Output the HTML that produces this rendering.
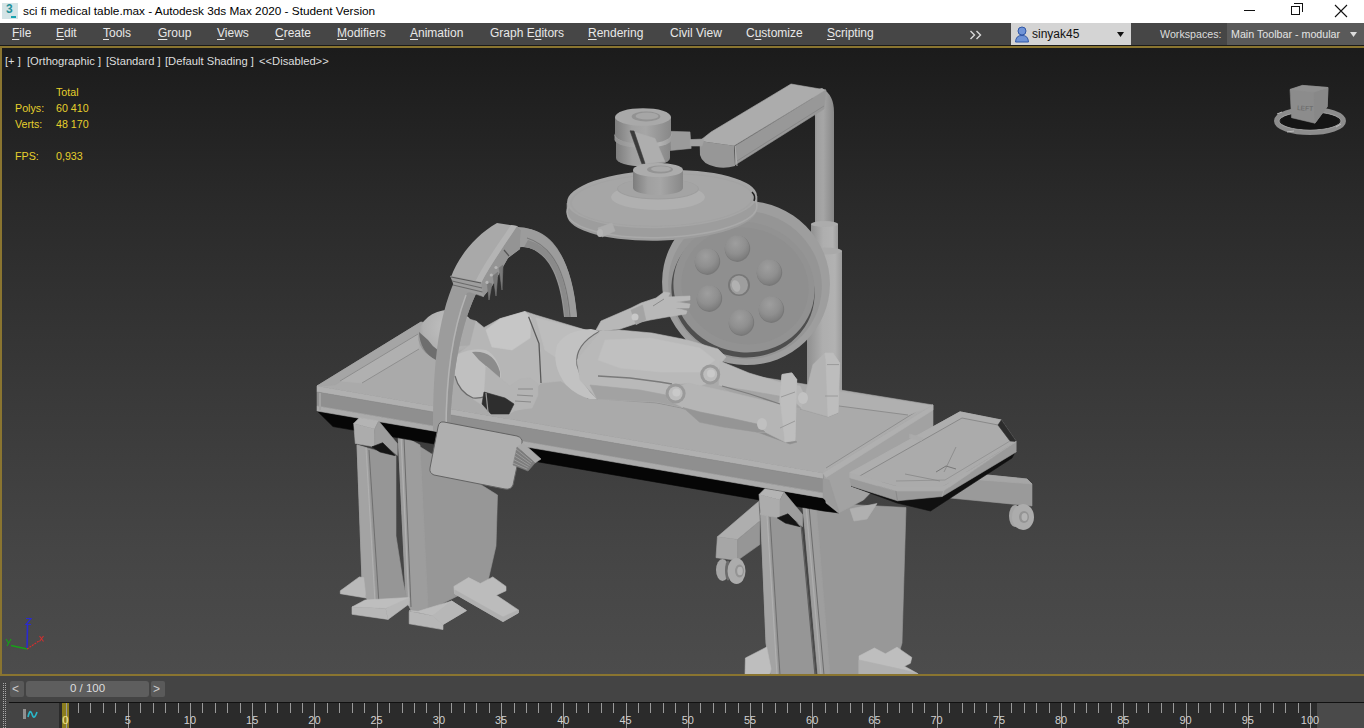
<!DOCTYPE html>
<html><head><meta charset="utf-8">
<style>
*{margin:0;padding:0;box-sizing:border-box}
html,body{width:1364px;height:728px;overflow:hidden;background:#444;font-family:"Liberation Sans",sans-serif}
.abs{position:absolute}
#title{position:absolute;left:0;top:0;width:1364px;height:23px;background:#fff}
#title .t{position:absolute;left:23px;top:4px;font-size:11.8px;color:#000;white-space:nowrap}
#menu{position:absolute;left:0;top:23px;width:1364px;height:23px;background:#464646;border-bottom:1px solid #1a1a1a}
.mi{position:absolute;top:3px;font-size:12px;color:#e8e8e8;white-space:nowrap}
.mi u{text-decoration:underline;text-underline-offset:2px}
#vp{position:absolute;left:0;top:46px;width:1364px;height:630px;border-top:2px solid #8a7530;border-left:2px solid #8a7530;border-bottom:2px solid #8a7530;
  background:linear-gradient(#1b1b1b 0%,#2a2a2a 25%,#393939 55%,#454545 80%,#4c4c4c 100%)}
.vl{position:absolute;font-size:11.2px;color:#dedede;white-space:nowrap}
.st{position:absolute;font-size:10.7px;color:#e6d02c;white-space:nowrap}
#tb{position:absolute;left:0;top:676px;width:1364px;height:52px;background:#444}
.tk{position:absolute;width:1px;background:#9a9a9a}
.tl{position:absolute;top:714px;width:40px;text-align:center;font-size:11px;color:#d0d0d0}
</style></head><body>
<div id="title">
 <div class="abs" style="left:2px;top:3px;width:16px;height:16px;background:#d3e4e6"></div>
 <div class="abs" style="left:6px;top:2px;font-size:12px;font-weight:bold;color:#22909a">3</div>
 <div class="abs" style="left:11px;top:16px;width:5px;height:2px;background:#1aa3b0"></div>
 <span class="t">sci fi medical table.max - Autodesk 3ds Max 2020 - Student Version</span>
 <div class="abs" style="left:1244px;top:10px;width:11px;height:1px;background:#111"></div>
 <div class="abs" style="left:1291px;top:6px;width:9px;height:9px;border:1px solid #111"></div>
 <div class="abs" style="left:1294px;top:3px;width:9px;height:9px;border-top:1px solid #111;border-right:1px solid #111"></div>
 <svg class="abs" style="left:1334px;top:4px" width="14" height="14"><path d="M1 1L13 13M13 1L1 13" stroke="#111" stroke-width="1.1"/></svg>
</div>
<div id="menu">
<span class="mi" style="left:12px"><u>F</u>ile</span>
<span class="mi" style="left:56px"><u>E</u>dit</span>
<span class="mi" style="left:103px"><u>T</u>ools</span>
<span class="mi" style="left:158px"><u>G</u>roup</span>
<span class="mi" style="left:217px"><u>V</u>iews</span>
<span class="mi" style="left:275px"><u>C</u>reate</span>
<span class="mi" style="left:337px"><u>M</u>odifiers</span>
<span class="mi" style="left:410px"><u>A</u>nimation</span>
<span class="mi" style="left:490px">Graph E<u>d</u>itors</span>
<span class="mi" style="left:588px"><u>R</u>endering</span>
<span class="mi" style="left:670px">Civil View</span>
<span class="mi" style="left:746px">C<u>u</u>stomize</span>
<span class="mi" style="left:827px"><u>S</u>cripting</span>
 <svg class="abs" style="left:969px;top:7px" width="14" height="10"><path d="M1.5 1L5.5 5L1.5 9M7.5 1L11.5 5L7.5 9" stroke="#d8d8d8" stroke-width="1.4" fill="none"/></svg>
 <div class="abs" style="left:1011px;top:0px;width:120px;height:22px;background:#d4d4d4"></div>
 <svg class="abs" style="left:1014px;top:2px" width="16" height="18"><circle cx="8" cy="6" r="4" fill="#6f93d6" stroke="#2f56a6" stroke-width="1"/><path d="M1.5 17 Q2 10 8 10.5 Q14 10 14.5 17Z" fill="#6f93d6" stroke="#2f56a6" stroke-width="1"/></svg>
 <span class="abs" style="left:1032px;top:4px;font-size:12px;color:#111">sinyak45</span>
 <svg class="abs" style="left:1117px;top:9px" width="8" height="6"><path d="M0 0H7L3.5 5Z" fill="#111"/></svg>
 <span class="abs" style="left:1160px;top:5px;font-size:10.7px;color:#dcdcdc">Workspaces:</span>
 <div class="abs" style="left:1227px;top:0px;width:137px;height:22px;background:#5a5a5a"></div>
 <span class="abs" style="left:1231px;top:5px;font-size:10.7px;color:#e4e4e4">Main Toolbar - modular</span>
 <svg class="abs" style="left:1350px;top:9px" width="8" height="6"><path d="M0 0H7L3.5 5Z" fill="#ddd"/></svg>
</div>
<div id="vp"></div>
<span class="vl" style="left:5px;top:54.5px">[+ ]</span><span class="vl" style="left:27px;top:54.5px">[Orthographic ]</span><span class="vl" style="left:106px;top:54.5px">[Standard ]</span><span class="vl" style="left:165px;top:54.5px">[Default Shading ]</span><span class="vl" style="left:259px;top:54.5px">&lt;&lt;Disabled&gt;&gt;</span>
<span class="st" style="left:56px;top:86px">Total</span>
<span class="st" style="left:15px;top:102px">Polys:</span><span class="st" style="left:56px;top:102px">60 410</span>
<span class="st" style="left:15px;top:118px">Verts:</span><span class="st" style="left:56px;top:118px">48 170</span>
<span class="st" style="left:15px;top:150px">FPS:</span><span class="st" style="left:56px;top:150px">0,933</span>
<svg class="abs" style="left:0;top:0" width="1364" height="674">
<defs>
 <linearGradient id="cylV" x1="0" y1="0" x2="1" y2="0">
  <stop offset="0" stop-color="#7d7d7d"/><stop offset="0.3" stop-color="#a0a0a0"/><stop offset="0.55" stop-color="#a6a6a6"/><stop offset="1" stop-color="#888888"/>
 </linearGradient>
 <linearGradient id="cylV2" x1="0" y1="0" x2="1" y2="0">
  <stop offset="0" stop-color="#909090"/><stop offset="0.45" stop-color="#aeaeae"/><stop offset="0.8" stop-color="#b2b2b2"/><stop offset="1" stop-color="#9b9b9b"/>
 </linearGradient>
</defs>
<path d="M815,117 L815,226 L834,226 L834,112 Q834,95 822,88 L810,92 Q815,100 815,117 Z" fill="url(#cylV)" />
<rect x="811" y="224" width="27" height="28" fill="url(#cylV2)"/>
<ellipse cx="824.5" cy="224" rx="13.5" ry="3" fill="#acacac" />
<rect x="807" y="251" width="35" height="145" fill="url(#cylV2)"/>
<ellipse cx="824.5" cy="251" rx="17.5" ry="3.5" fill="#a9a9a9" />
<ellipse cx="746" cy="283" rx="84" ry="82" fill="#9e9e9e" transform="rotate(12 746 283)" />
<ellipse cx="745" cy="285" rx="77" ry="74" fill="#959595" transform="rotate(14 745 285)" />
<ellipse cx="743" cy="291" rx="72" ry="66" fill="#4e4e4e" transform="rotate(15 743 291)" />
<ellipse cx="744" cy="287" rx="71" ry="65" fill="#929292" transform="rotate(15 744 287)" />
<ellipse cx="745" cy="286" rx="64" ry="58" fill="#8f8f8f" transform="rotate(15 745 286)" />
<radialGradient id="lightG" cx="0.38" cy="0.35" r="0.7"><stop offset="0" stop-color="#9e9e9e"/><stop offset="0.6" stop-color="#8f8f8f"/><stop offset="1" stop-color="#7b7b7b"/></radialGradient>
<ellipse cx="707.5" cy="261.8" rx="12.6" ry="13.1" fill="#787878" transform="rotate(20 707.5 261.8)" />
<ellipse cx="707" cy="261" rx="12.2" ry="12.8" fill="url(#lightG)" transform="rotate(20 707 261)" />
<ellipse cx="737.5" cy="248.8" rx="12.6" ry="13.1" fill="#787878" transform="rotate(20 737.5 248.8)" />
<ellipse cx="737" cy="248" rx="12.2" ry="12.8" fill="url(#lightG)" transform="rotate(20 737 248)" />
<ellipse cx="769.5" cy="272.8" rx="12.6" ry="13.1" fill="#787878" transform="rotate(20 769.5 272.8)" />
<ellipse cx="769" cy="272" rx="12.2" ry="12.8" fill="url(#lightG)" transform="rotate(20 769 272)" />
<ellipse cx="771.5" cy="309.8" rx="12.6" ry="13.1" fill="#787878" transform="rotate(20 771.5 309.8)" />
<ellipse cx="771" cy="309" rx="12.2" ry="12.8" fill="url(#lightG)" transform="rotate(20 771 309)" />
<ellipse cx="741.5" cy="322.8" rx="12.6" ry="13.1" fill="#787878" transform="rotate(20 741.5 322.8)" />
<ellipse cx="741" cy="322" rx="12.2" ry="12.8" fill="url(#lightG)" transform="rotate(20 741 322)" />
<ellipse cx="709.5" cy="298.8" rx="12.6" ry="13.1" fill="#787878" transform="rotate(20 709.5 298.8)" />
<ellipse cx="709" cy="298" rx="12.2" ry="12.8" fill="url(#lightG)" transform="rotate(20 709 298)" />
<ellipse cx="739" cy="285" rx="11" ry="11" fill="#787878" />
<ellipse cx="739" cy="285" rx="9" ry="9.5" fill="#9e9e9e" />
<ellipse cx="736" cy="286" rx="4" ry="6" fill="#b1b1b1" transform="rotate(-20 736 286)" />
<path d="M520,228 C545,228 570,245 577,317 L564,317 C560,275 548,252 524,246 Z" fill="#959595" />
<path d="M530,238 C552,244 566,265 571,317 L568,317 C563,270 552,250 528,243 Z" fill="#7b7b7b" />
<polygon points="398,433 497.5,495 496,546 488,581 425,612 412,612 406,600" fill="#979797" stroke="#979797" stroke-width="0.6" stroke-linejoin="round" />
<polygon points="398,433 420,445 428,608 412,612 406,600" fill="#9d9d9d" stroke="#9d9d9d" stroke-width="0.6" stroke-linejoin="round" />
<polyline points="401,436 409,606" fill="none" stroke="#b0b0b0" stroke-width="1.2" />
<polyline points="404,438 411,607" fill="none" stroke="#6d6d6d" stroke-width="1" />
<polygon points="357,445 396,456 396,536 403,581 407,600 368,603 362,581" fill="#969696" stroke="#969696" stroke-width="0.6" stroke-linejoin="round" />
<polygon points="357,445 367,448 376,602 368,603 362,581" fill="#a3a3a3" stroke="#a3a3a3" stroke-width="0.6" stroke-linejoin="round" />
<polyline points="366,448 375,602" fill="none" stroke="#b1b1b1" stroke-width="1" />
<polyline points="369,450 379,604" fill="none" stroke="#6f6f6f" stroke-width="1" />
<polygon points="340.3,590.8 359.3,576.9 363.7,577.6 366,598 340.3,593.7" fill="#b9b9b9" stroke="#b9b9b9" stroke-width="0.6" stroke-linejoin="round" />
<polygon points="352,607 365,600 409,597.5 409,601 385.7,608.4" fill="#bebebe" stroke="#bebebe" stroke-width="0.6" stroke-linejoin="round" />
<polygon points="352,607 385.7,608.4 388,619.4 352,614.3" fill="#b7b7b7" stroke="#b7b7b7" stroke-width="0.6" stroke-linejoin="round" />
<polygon points="385.7,608.4 409,598 409,604 388,619.4" fill="#b7b7b7" stroke="#b7b7b7" stroke-width="0.6" stroke-linejoin="round" />
<polygon points="409.2,610.6 418,611.3 451.7,601 466.4,610.6 443,624.5 432.6,615.7" fill="#bcbcbc" stroke="#bcbcbc" stroke-width="0.6" stroke-linejoin="round" />
<polygon points="409.2,611.3 432.6,615.7 443,624.5 443,629.6 409.2,623.8" fill="#b7b7b7" stroke="#b7b7b7" stroke-width="0.6" stroke-linejoin="round" />
<polygon points="432.6,615.7 451.7,601 466.4,610.6 443,624.5" fill="#b7b7b7" stroke="#b7b7b7" stroke-width="0.6" stroke-linejoin="round" />
<polygon points="453.9,586.4 468.6,577.6 480.3,583.5 492.8,576.9 506,586.4 506,590.8 496.4,595.2 518.4,609.9 518.4,612.8 503,621.6 454.6,593.7" fill="#bcbcbc" stroke="#bcbcbc" stroke-width="0.6" stroke-linejoin="round" />
<polygon points="454.6,593.7 503,621.6 518.4,612.8 518.4,609.9 503,617 455,590" fill="#b0b0b0" stroke="#b0b0b0" stroke-width="0.6" stroke-linejoin="round" />
<polygon points="717.4,536.8 758.5,501.5 759.8,521 737.6,539.4" fill="#aeaeae" stroke="#aeaeae" stroke-width="0.6" stroke-linejoin="round" />
<polygon points="717.4,536.8 737.6,539.4 737.6,560.3 716,557.7" fill="#a6a6a6" stroke="#a6a6a6" stroke-width="0.6" stroke-linejoin="round" />
<polygon points="737.6,539.4 759.8,521 759.8,544.6 737.6,560.3" fill="#969696" stroke="#969696" stroke-width="0.6" stroke-linejoin="round" />
<ellipse cx="722.5" cy="570" rx="6.5" ry="11" fill="#a5a5a5" />
<ellipse cx="728" cy="570.5" rx="3" ry="10" fill="#6b6b6b" />
<ellipse cx="736.5" cy="571" rx="9" ry="13" fill="#acacac" />
<ellipse cx="739.5" cy="571" rx="4.5" ry="6.5" fill="#949494" />
<ellipse cx="740" cy="571" rx="2.8" ry="4.2" fill="#b4b4b4" />
<polygon points="948,471 1027,479 1032,484 1032,506 950,498" fill="#9a9a9a" stroke="#9a9a9a" stroke-width="0.6" stroke-linejoin="round" />
<polygon points="948,471 1027,479 1032,484 955,478" fill="#a6a6a6" stroke="#a6a6a6" stroke-width="0.6" stroke-linejoin="round" />
<ellipse cx="1015" cy="516" rx="6" ry="11" fill="#a5a5a5" />
<ellipse cx="1019" cy="516.5" rx="3" ry="10" fill="#6b6b6b" />
<ellipse cx="1023" cy="517" rx="11" ry="13" fill="#acacac" />
<ellipse cx="1024" cy="517" rx="5" ry="6" fill="#949494" />
<ellipse cx="1024.5" cy="517" rx="3" ry="4" fill="#b4b4b4" />
<polygon points="802.5,502 906,507.5 902,643 897,660 893,675 818,675" fill="#989898" stroke="#989898" stroke-width="0.6" stroke-linejoin="round" />
<polygon points="802.5,502 816,503 830,675 818,675" fill="#9e9e9e" stroke="#9e9e9e" stroke-width="0.6" stroke-linejoin="round" />
<polyline points="806,505 821,675" fill="none" stroke="#aeaeae" stroke-width="1.2" />
<polyline points="809,506 824,675" fill="none" stroke="#6d6d6d" stroke-width="1" />
<polygon points="760.6,513 801,524 815,675 771,675 766,643" fill="#969696" stroke="#969696" stroke-width="0.6" stroke-linejoin="round" />
<polygon points="760.6,513 768,515 778,675 771,675 766,643" fill="#a3a3a3" stroke="#a3a3a3" stroke-width="0.6" stroke-linejoin="round" />
<polyline points="767,516 777,675" fill="none" stroke="#b1b1b1" stroke-width="1" />
<polyline points="770,517 780,675" fill="none" stroke="#6f6f6f" stroke-width="1" />
<polyline points="801,524 815,675" fill="none" stroke="#5e5e5e" stroke-width="1.2" />
<polygon points="745.4,658 766.7,647 771,669 769.6,675 745,675" fill="#bebebe" stroke="#bebebe" stroke-width="0.6" stroke-linejoin="round" />
<polygon points="859,656 874.4,648 885.4,653.8 897,647.2 911.8,657.4 910.4,663.3 904.5,666.2 917.7,673.6 917.7,675 859,675" fill="#bebebe" stroke="#bebebe" stroke-width="0.6" stroke-linejoin="round" />
<polygon points="859,660 904.5,670 917.7,673.6 917.7,675 859,675" fill="#b0b0b0" stroke="#b0b0b0" stroke-width="0.6" stroke-linejoin="round" />
<polygon points="317,410.8 823,497.9 839,513 823,510.9 700,489.7 333,426.6" fill="#060606" stroke="#060606" stroke-width="0.6" stroke-linejoin="round" />
<polygon points="317,386 421,322 933,405 823,472.9" fill="#aaaaaa" stroke="#aaaaaa" stroke-width="0.6" stroke-linejoin="round" />
<polygon points="317,386 421,322 428,327 335,385" fill="#a5a5a5" stroke="#a5a5a5" stroke-width="0.6" stroke-linejoin="round" />
<polygon points="823,472.9 826,468 925,406 933,405" fill="#acacac" stroke="#acacac" stroke-width="0.6" stroke-linejoin="round" />
<polyline points="826,468 925,406" fill="none" stroke="#8f8f8f" stroke-width="1" />
<polygon points="340,381 418,334 419,349 362,383" fill="#b0b0b0" stroke="#b0b0b0" stroke-width="0.6" stroke-linejoin="round" />
<polyline points="340,381 418,334" fill="none" stroke="#8d8d8d" stroke-width="1" />
<polyline points="362,383 419,349" fill="none" stroke="#8f8f8f" stroke-width="1" />
<polygon points="834,391 933,406 908,415 839,406" fill="#b0b0b0" stroke="#b0b0b0" stroke-width="0.6" stroke-linejoin="round" />
<polyline points="839,406 908,415" fill="none" stroke="#8d8d8d" stroke-width="1" />
<polygon points="317,386 823,472.9 823,478.9 317,392" fill="#b0b0b0" stroke="#b0b0b0" stroke-width="0.6" stroke-linejoin="round" />
<polygon points="317,392 823,478.9 823,492.9 317,406" fill="#8f8f8f" stroke="#8f8f8f" stroke-width="0.6" stroke-linejoin="round" />
<polygon points="317,406 823,492.9 823,497.9 317,411" fill="#ababab" stroke="#ababab" stroke-width="0.6" stroke-linejoin="round" />
<polyline points="320,393 320,410" fill="none" stroke="#a2a2a2" stroke-width="2" />
<polygon points="823,472.9 933,405 933,428 863.5,500 838.5,513 826,503" fill="#a2a2a2" stroke="#a2a2a2" stroke-width="0.6" stroke-linejoin="round" />
<polygon points="823,472.9 826,477.4 933,410 933,405" fill="#b0b0b0" stroke="#b0b0b0" stroke-width="0.6" stroke-linejoin="round" />
<polygon points="823,478.9 829,480 839,512 823,497.9" fill="#9b9b9b" stroke="#9b9b9b" stroke-width="0.6" stroke-linejoin="round" />
<polygon points="850,509 877,503.5 867,519 854,521" fill="#b0b0b0" stroke="#b0b0b0" stroke-width="0.6" stroke-linejoin="round" />
<polygon points="353.7,423.4 374.7,429 374.7,446.8 355.3,443.5" fill="#acacac" stroke="#acacac" stroke-width="0.6" stroke-linejoin="round" />
<polygon points="353.7,423.4 359.4,417.7 378.7,421 374.7,429" fill="#b4b4b4" stroke="#b4b4b4" stroke-width="0.6" stroke-linejoin="round" />
<polygon points="374.7,429 378.7,421 397.3,443.5 397.3,455.6 383.5,443.5 374.7,446.8" fill="#9d9d9d" stroke="#9d9d9d" stroke-width="0.6" stroke-linejoin="round" />
<polygon points="372,446.8 382.7,442.7 394.8,455.6 380,452" fill="#141414" stroke="#141414" stroke-width="0.6" stroke-linejoin="round" />
<polygon points="759.0,494.5 780.0,500.1 780.0,517.9 760.6,514.6" fill="#acacac" stroke="#acacac" stroke-width="0.6" stroke-linejoin="round" />
<polygon points="759.0,494.5 764.7,488.8 784.0,492.1 780.0,500.1" fill="#b4b4b4" stroke="#b4b4b4" stroke-width="0.6" stroke-linejoin="round" />
<polygon points="780.0,500.1 784.0,492.1 802.6,514.6 802.6,526.7 788.8,514.6 780.0,517.9" fill="#9d9d9d" stroke="#9d9d9d" stroke-width="0.6" stroke-linejoin="round" />
<polygon points="777.3,517.9 788.0,513.8 800.1,526.7 785.3,523.1" fill="#141414" stroke="#141414" stroke-width="0.6" stroke-linejoin="round" />
<polygon points="851,486 897.5,500.8 942,496.5 1016.2,450 1012,458 930.5,511 897,503" fill="#101010" stroke="#101010" stroke-width="0.6" stroke-linejoin="round" />
<polygon points="849.7,472.8 960,411.8 1001.4,420 1016.2,441.5 943.7,486 895.9,486" fill="#ababab" stroke="#ababab" stroke-width="0.6" stroke-linejoin="round" />
<polygon points="849.7,472.8 960,411.8 1001.4,420 998,425 962,418 858,477" fill="#aeaeae" stroke="#aeaeae" stroke-width="0.6" stroke-linejoin="round" />
<polyline points="858,477 962,418 998,425" fill="none" stroke="#898989" stroke-width="1" />
<polygon points="998,425 1001.4,420 1016.2,441.5 1010,441" fill="#2c2c2c" stroke="#2c2c2c" stroke-width="0.6" stroke-linejoin="round" />
<polyline points="1010,441 945,480 896,481" fill="none" stroke="#959595" stroke-width="1" />
<polygon points="849.7,477.8 895.9,491 943.7,491 1016.2,441.5 1016.2,452 942,496.5 897.5,500.8 851.4,486" fill="#9a9a9a" stroke="#9a9a9a" stroke-width="0.6" stroke-linejoin="round" />
<polygon points="849.7,472.8 895.9,486 943.7,486 1016.2,441.5 943.7,491 895.9,491 849.7,477.8" fill="#acacac" stroke="#acacac" stroke-width="0.6" stroke-linejoin="round" />
<polyline points="895.9,491 897.5,500.8" fill="none" stroke="#898989" stroke-width="1" />
<polyline points="943.7,491 942,496.5" fill="none" stroke="#a9a9a9" stroke-width="1" />
<polygon points="909.6,434 923,438 921,441 909.6,438" fill="#ababab" stroke="#ababab" stroke-width="0.6" stroke-linejoin="round" />
<polyline points="905,474 940,481" fill="none" stroke="#878787" stroke-width="0.8" />
<polyline points="944,472 956,447" fill="none" stroke="#878787" stroke-width="0.8" />
<polyline points="936,472 946,466 956,469" fill="none" stroke="#787878" stroke-width="1" />
<!--NS-->
<polygon points="587,398 657,403 681,408 760,433 790,444 797,442 785,436 700,410 640,400" fill="#8e8e8e" stroke="#8e8e8e" stroke-width="0.6" stroke-linejoin="round" />
<polygon points="800,409 838,413 828,417" fill="#9a9a9a" stroke="#9a9a9a" stroke-width="0.6" stroke-linejoin="round" />
<radialGradient id="headG" cx="0.6" cy="0.35" r="0.7"><stop offset="0" stop-color="#c2c2c2"/><stop offset="0.7" stop-color="#b0b0b0"/><stop offset="1" stop-color="#8a8a8a"/></radialGradient>
<ellipse cx="447" cy="335" rx="29" ry="25" fill="url(#headG)" transform="rotate(-10 447 335)" />
<path d="M419,332 Q420,352 436,360 Q446,362 452,357 Q436,352 428,340 Z" fill="#6e6e6e" />
<polygon points="459,316 476,321 481,329 470,345 459,346" fill="#a9a9a9" stroke="#a9a9a9" stroke-width="0.6" stroke-linejoin="round" />
<polygon points="476,321 484,327.5 500,318.6 525,311.4 535.7,315 589,331 600,331 575,365 590,399 560.7,381 541,383 538,386 532,407 515,410.5 509,414 491,414 482,405 473,399 458,386 455,374 455,356 470,345" fill="#b6b6b6" stroke="#b6b6b6" stroke-width="0.6" stroke-linejoin="round" />
<polygon points="500,319 525,311.5 531,318 530,338 512,350 492,347 486,330" fill="#c6c6c6" stroke="#c6c6c6" stroke-width="0.6" stroke-linejoin="round" />
<polygon points="536,318 589,331 580,345 560,360 545,350" fill="#bdbdbd" stroke="#bdbdbd" stroke-width="0.6" stroke-linejoin="round" />
<polyline points="528.6,316.8 539,343.6 541,383" fill="none" stroke="#5a5a5a" stroke-width="1.3" />
<path d="M455,356 Q470,347 486,350 Q498,356 501,374 Q500,388 496,391 Q485,399 473,398 Q459,392 455,376 Z" fill="#c0c0c0" />
<path d="M472,352 Q494,350 500,372 L500,384 Q494,372 486,366 Q478,360 472,352 Z" fill="#8c8c8c" />
<path d="M455,376 Q459,392 473,398 Q485,399 496,391" fill="none" stroke="#6a6a6a" stroke-width="1.2"/>
<polygon points="486,366 500,378 510,386 520,379 530,378 538,384 538,395 532,408 515,410 491,414 484,400" fill="#b4b4b4" stroke="#b4b4b4" stroke-width="0.6" stroke-linejoin="round" />
<polygon points="484,392 505,398 514,404 509,414 491,414 482,404" fill="#2e2e2e" stroke="#2e2e2e" stroke-width="0.6" stroke-linejoin="round" />
<polyline points="518,389 533,389" fill="none" stroke="#8a8a8a" stroke-width="1" />
<polyline points="517,395 533,396" fill="none" stroke="#8a8a8a" stroke-width="1" />
<polyline points="515,401 531,402" fill="none" stroke="#8a8a8a" stroke-width="1" />
<polyline points="486,393 488,412" fill="none" stroke="#9a9a9a" stroke-width="1.2" />
<path d="M591,329 Q566,330 557,345 Q551,365 566,385 Q576,395 590,399 L598,399 Q582,385 577,365 Q574,345 600,331 Z" fill="#c2c2c2" />
<path d="M598,399 Q582,385 577,365 Q574,345 600,331" fill="none" stroke="#707070" stroke-width="1.2"/>
<polygon points="600,331 619,330 652,333 685,339.5 718,349 726,357 722,362 716,380 700,386 688,383 676,384 666,392 668,400 683,407.5 657,402 597,399 580,380 577,360" fill="#b9b9b9" stroke="#b9b9b9" stroke-width="0.6" stroke-linejoin="round" />
<polygon points="605,340 650,338 700,348 715,360 700,372 660,372 620,368 598,360" fill="#c0c0c0" stroke="#c0c0c0" stroke-width="0.6" stroke-linejoin="round" />
<polyline points="598,376 630,378 660,382 672,384" fill="none" stroke="#7a7a7a" stroke-width="1.3" />
<polygon points="590,385 640,390 666,395 683,407.5 657,402 597,399" fill="#a2a2a2" stroke="#a2a2a2" stroke-width="0.6" stroke-linejoin="round" />
<polygon points="720,361 749,373 782,383 800,386 806,399 802,409 778.6,402.5 742,399 719,386" fill="#b7b7b7" stroke="#b7b7b7" stroke-width="0.6" stroke-linejoin="round" />
<polygon points="719,386 742,399 778.6,402.5 802,409 790,398 745,390" fill="#a4a4a4" stroke="#a4a4a4" stroke-width="0.6" stroke-linejoin="round" />
<polygon points="801.7,409 806,392 813,364.6 824.8,353 833,353 839.6,363 838,412.4 828,416.6" fill="#b3b3b3" stroke="#b3b3b3" stroke-width="0.6" stroke-linejoin="round" />
<polygon points="824.8,353 833,353 839.6,363 838,412.4 828,416.6 826,360" fill="#bdbdbd" stroke="#bdbdbd" stroke-width="0.6" stroke-linejoin="round" />
<polyline points="827,364.6 839,364.6" fill="none" stroke="#9a9a9a" stroke-width="1" />
<polyline points="825,396 838,396" fill="none" stroke="#9a9a9a" stroke-width="1" />
<ellipse cx="803" cy="398" rx="5" ry="6" fill="#c2c2c2" />
<polygon points="688,383 732,392.7 778.6,404 780,397.6 782,374.5 791.8,372.9 796.7,379.5 795,440.5 785,442 765.4,432.2 757,432.2 724,427.3 699.5,422.3 683,407.5 668,400 666,392" fill="#b5b5b5" stroke="#b5b5b5" stroke-width="0.6" stroke-linejoin="round" />
<polygon points="683,407.5 700,412 730,418 757,424 765,432 757,432.2 724,427.3 699.5,422.3" fill="#959595" stroke="#959595" stroke-width="0.6" stroke-linejoin="round" />
<polyline points="722,386 750,394 780,404" fill="none" stroke="#7c7c7c" stroke-width="1.2" />
<polygon points="782,374.5 791.8,372.9 796.7,379.5 795,440.5 785,442 780,397.6" fill="#bebebe" stroke="#bebebe" stroke-width="0.6" stroke-linejoin="round" />
<polyline points="781,397 795,392" fill="none" stroke="#9a9a9a" stroke-width="1" />
<polyline points="780,428 795,421" fill="none" stroke="#9a9a9a" stroke-width="1" />
<ellipse cx="762" cy="424" rx="5" ry="6" fill="#c0c0c0" />
<ellipse cx="710.2" cy="374.5" rx="10" ry="10" fill="#9a9a9a" />
<ellipse cx="710.2" cy="374.5" rx="7" ry="7" fill="#bdbdbd" />
<ellipse cx="711" cy="373.5" rx="4" ry="4" fill="#c9c9c9" />
<ellipse cx="675.6" cy="393.5" rx="10" ry="10" fill="#9a9a9a" />
<ellipse cx="675.6" cy="393.5" rx="7" ry="7" fill="#bdbdbd" />
<ellipse cx="676.4" cy="392.5" rx="4" ry="4" fill="#c9c9c9" />
<polygon points="596,330 601,321 631,308 641,303 656,298 664,292 670,293 668,297 690,296 690,300 676,302 690,304 689,308 676,308 687,311 686,314 667,317 650,320 641,322 620,329 603,331" fill="#b8b8b8" stroke="#b8b8b8" stroke-width="0.6" stroke-linejoin="round" />
<polygon points="631,310 642.5,305 645.8,319.8 636,324.7" fill="#a4a4a4" stroke="#a4a4a4" stroke-width="0.6" stroke-linejoin="round" />
<polyline points="653,306 664,299" fill="none" stroke="#8c8c8c" stroke-width="1" />
<ellipse cx="635" cy="317" rx="3.5" ry="3.5" fill="#c8c8c8" />
<!--/NS-->
<path d="M433,431 C433,370 437,320 455,280 C470,250 492,228 518,227 C545,228 572,250 577,317 L565,317 C562,275 548,248 522,247 C505,248 490,262 478,290 C462,320 452,370 450,431 Z" fill="#9c9c9c" />
<path d="M527,238 C550,245 566,268 570,317" fill="none" stroke="#797979" stroke-width="1.2"/>
<path d="M524,247 C548,250 562,275 565,317 L569,317 C566,272 552,247 528,240 Z" fill="#8a8a8a" />
<path d="M447,431 C447,380 452,335 467,293 L478,290 C462,320 452,370 450,431 Z" fill="#929292" />
<path d="M446,431 C446,380 451,335 466,295" fill="none" stroke="#b4b4b4" stroke-width="1.5"/>
<path d="M451,277 C458,258 474,236 497,223 L517,226 L521,230 L520,249 L508,258 L500,272 L492,286 L483,297 L481,283 L455,287 Z" fill="#a9a9a9" />
<path d="M517,226 L521,230 L520,249 L508,258 L500,272 L492,286 L483,297 L481,283 C491,264 506,243 517,226 Z" fill="#949494" />
<path d="M511,225 L517,226 C506,243 491,264 481,283 L475,282 C485,262 499,243 511,225 Z" fill="#b4b4b4" />
<polygon points="450.5,276 481,282.4 483.3,296.6 454.8,287" fill="#9e9e9e" stroke="#9e9e9e" stroke-width="0.6" stroke-linejoin="round" />
<polyline points="451,277 481,283" fill="none" stroke="#5a5a5a" stroke-width="1.1" />
<polyline points="452,281 482,288" fill="none" stroke="#6b6b6b" stroke-width="1.1" />
<polyline points="453,285 482.5,292" fill="none" stroke="#6b6b6b" stroke-width="1.1" />
<polygon points="487,282 489,300 492,284" fill="#797979" stroke="#797979" stroke-width="0.6" stroke-linejoin="round" />
<polygon points="493,276 496,296 498,272" fill="#797979" stroke="#797979" stroke-width="0.6" stroke-linejoin="round" />
<polygon points="499,268 502,290 503,265" fill="#797979" stroke="#797979" stroke-width="0.6" stroke-linejoin="round" />
<ellipse cx="496" cy="267.5" rx="1.6" ry="1.6" fill="#b7b7b7" />
<ellipse cx="491.3" cy="275" rx="1.6" ry="1.6" fill="#b7b7b7" />
<ellipse cx="487" cy="282.4" rx="1.6" ry="1.6" fill="#b7b7b7" />
<polyline points="504,250 509,256" fill="none" stroke="#555" stroke-width="1.2" />
<path d="M444,422 L517,436 Q523,438 522,443 L513,485 Q511,490 505,489 L434,475 Q429,473 430,468 L438,427 Q439,421 444,422 Z" fill="#afafaf" stroke="#636363" stroke-width="1"/>
<polygon points="517,447 523,443 541,459 535,463" fill="#a9a9a9" stroke="#a9a9a9" stroke-width="0.6" stroke-linejoin="round" />
<polygon points="517,447 535,463 528,471 513,465" fill="#7d7d7d" stroke="#7d7d7d" stroke-width="0.6" stroke-linejoin="round" />
<polyline points="516.0,449.0 532.0,462.0" fill="none" stroke="#a2a2a2" stroke-width="0.8" />
<polyline points="515.2,452.5 530.8,463.8" fill="none" stroke="#a2a2a2" stroke-width="0.8" />
<polyline points="514.4,456.0 529.6,465.6" fill="none" stroke="#a2a2a2" stroke-width="0.8" />
<polyline points="513.6,459.5 528.4,467.4" fill="none" stroke="#a2a2a2" stroke-width="0.8" />
<polyline points="512.8,463.0 527.2,469.2" fill="none" stroke="#a2a2a2" stroke-width="0.8" />
<polygon points="699.6,141 711,132 791,84 826,90 734,145.7" fill="#acacac" stroke="#acacac" stroke-width="0.6" stroke-linejoin="round" />
<polygon points="735,146 826,90 824,109 735,165" fill="#989898" stroke="#989898" stroke-width="0.6" stroke-linejoin="round" />
<polyline points="737,161 824,106" fill="none" stroke="#888888" stroke-width="1" />
<path d="M699.6,141 L734,145.7 L735,166 Q725,169 716,167 Q702,164 700,155 Z" fill="#979797" />
<polyline points="735,146 737,166" fill="none" stroke="#adadad" stroke-width="1" />
<polygon points="670,131.3 690,131.9 691.2,148.4 670.3,150.5" fill="#9b9b9b" stroke="#9b9b9b" stroke-width="0.6" stroke-linejoin="round" />
<polygon points="690,139.6 704,139 702,146 690,146" fill="#a2a2a2" stroke="#a2a2a2" stroke-width="0.6" stroke-linejoin="round" />
<path d="M616,139 L616,158 A27,8.5 0 0 0 670,158 L670,139 Z" fill="url(#cylV)"/>
<path d="M614.5,135 L614.5,139.5 A28.5,8.5 0 0 0 671.5,139.5 L671.5,135 Z" fill="url(#cylV2)"/>
<ellipse cx="643" cy="135" rx="28.5" ry="8.5" fill="#aeaeae" />
<path d="M615,117 L615,135 A28,8.8 0 0 0 671,135 L671,117 Z" fill="url(#cylV)"/>
<ellipse cx="643" cy="117" rx="28" ry="8.8" fill="#a9a9a9" />
<ellipse cx="646" cy="116.5" rx="14.3" ry="5" fill="#929292" />
<ellipse cx="647" cy="116" rx="11.5" ry="3.6" fill="#a6a6a6" />
<polygon points="630,130.8 655,138.5 664.8,161.5 641.8,163.7" fill="#aeaeae" stroke="#aeaeae" stroke-width="0.6" stroke-linejoin="round" />
<polygon points="630,130.8 634,131 645,163.5 641.8,163.7" fill="#3a3a3a" stroke="#3a3a3a" stroke-width="0.6" stroke-linejoin="round" />
<ellipse cx="662" cy="212" rx="95" ry="28.5" fill="#9d9d9d" transform="rotate(-2 662 212)" />
<polygon points="567,203 567,212 757,208 757,196" fill="#9d9d9d" stroke="#9d9d9d" stroke-width="0.6" stroke-linejoin="round" />
<ellipse cx="662" cy="209" rx="95" ry="28.5" fill="none" transform="rotate(-2 662 209)" stroke="#a9a9a9" stroke-width="1.6"/>
<ellipse cx="662" cy="199" rx="95" ry="29" fill="#a6a6a6" transform="rotate(-2 662 199)" />
<ellipse cx="662" cy="200" rx="92" ry="26.5" fill="#a3a3a3" transform="rotate(-2 662 200)" />
<ellipse cx="662" cy="200" rx="90" ry="25.5" fill="#a6a6a6" transform="rotate(-2 662 200)" />
<path d="M754,201 Q756,196 752,192" fill="none" stroke="#222" stroke-width="1.5"/>
<polygon points="598,228 612,223 615,231 602,237" fill="#acacac" stroke="#acacac" stroke-width="0.6" stroke-linejoin="round" />
<ellipse cx="600" cy="233" rx="3" ry="4" fill="#b4b4b4" />
<ellipse cx="658" cy="197" rx="47" ry="13" fill="#b0b0b0" />
<ellipse cx="658" cy="189" rx="41" ry="10.5" fill="#9e9e9e" />
<ellipse cx="658" cy="188.5" rx="40" ry="10" fill="#a4a4a4" />
<path d="M633,170 L633,188 A25,7 0 0 0 683,188 L683,170 Z" fill="url(#cylV)"/>
<ellipse cx="658" cy="170" rx="25" ry="7" fill="#acacac" />
<ellipse cx="660" cy="169.5" rx="13" ry="4" fill="#949494" />
<ellipse cx="661" cy="169" rx="10" ry="2.8" fill="#a9a9a9" />
<ellipse cx="1310" cy="121" rx="33.5" ry="11.5" fill="none" stroke="#8c8c8c" stroke-width="5"/>
<ellipse cx="1310" cy="121" rx="31" ry="9" fill="none" stroke="#a8a8a8" stroke-width="0.8"/>
<ellipse cx="1310" cy="121" rx="29" ry="8.5" fill="#151515" />
<polygon points="1290,89.5 1302.5,85.4 1328,87.5 1327.2,106.7 1314.9,123.2 1291.5,117.7" fill="#8c8c8c" stroke="#8c8c8c" stroke-width="0.6" stroke-linejoin="round" />
<polygon points="1314,92 1328,87.5 1327.2,106.7 1314.9,123.2" fill="#888888" stroke="#888888" stroke-width="0.6" stroke-linejoin="round" />
<polygon points="1290,89.5 1302.5,85.4 1328,87.5 1314,92" fill="#909090" stroke="#909090" stroke-width="0.6" stroke-linejoin="round" />
<text x="1297" y="110" font-family="Liberation Sans" font-size="6.5" fill="#666" transform="rotate(4 1297 110)">LEFT</text>
<polyline points="1277,114 1282,112" fill="none" stroke="#bbb" stroke-width="1" />
<polyline points="1336,127 1341,124" fill="none" stroke="#bbb" stroke-width="1" />
<polyline points="1287,132 1294,131" fill="none" stroke="#bbb" stroke-width="1" />
<path d="M27 649 L27.5 625" stroke="#2a2ad0" stroke-width="1.6"/>
<path d="M26 618.5 H31 L26 624.5 H31" stroke="#2a2ad0" stroke-width="1.2" fill="none"/>
<path d="M27 649 L11 645.5" stroke="#18a018" stroke-width="1.5"/>
<path d="M6 639 L8.5 643 M11 639 L7 646" stroke="#18a018" stroke-width="1.1" fill="none"/>
<path d="M27 649 L39 641" stroke="#d03030" stroke-width="1.2" stroke-dasharray="2 1"/>
<path d="M39.5 636 L43.5 641.5 M43.5 636 L39.5 641.5" stroke="#d03030" stroke-width="1.1" fill="none"/>
</svg>
<div id="tb">
 <div class="abs" style="left:3px;top:7px;width:3px;height:45px;border-left:1px dotted #aaa;border-right:1px dotted #aaa"></div>
 <div class="abs" style="left:10px;top:5px;width:14px;height:16px;background:#5a5a5a;border-radius:2px"></div>
 <span class="abs" style="left:12px;top:6px;font-size:12px;color:#ccc">&lt;</span>
 <div class="abs" style="left:26px;top:5px;width:123px;height:16px;background:#5e5e5e;border-radius:3px"></div>
 <span class="abs" style="left:26px;top:6px;width:123px;text-align:center;font-size:11.5px;color:#ddd">0 / 100</span>
 <div class="abs" style="left:151px;top:5px;width:14px;height:16px;background:#5a5a5a;border-radius:2px"></div>
 <span class="abs" style="left:153px;top:6px;font-size:12px;color:#ccc">&gt;</span>
 <div class="abs" style="left:9px;top:26px;width:1355px;height:1px;background:#111"></div>
 <div class="abs" style="left:59px;top:27px;width:1258px;height:25px;background:#2b2b2b"></div>
 <div class="abs" style="left:1317px;top:27px;width:47px;height:25px;background:#4a4a4a"></div>
 <div class="abs" style="left:62px;top:27px;width:7px;height:25px;background:#8a7d1e"></div>
 <div class="abs" style="left:23px;top:710px"></div>
</div>
<svg class="abs" style="left:22px;top:708px" width="18" height="14"><path d="M1 2h3M1 4h3M1 6h3M1 8h3M1 10h3" stroke="#ddd" stroke-width="1"/><path d="M6 9 Q8 0 10 6 Q12 13 15 4" stroke="#2ab7c9" stroke-width="1.6" fill="none"/></svg>
<div class="tk" style="left:65.5px;top:703px;height:25px"></div>
<span class="tl" style="left:45.5px">0</span>
<div class="tk" style="left:77.9px;top:703px;height:10px"></div>
<div class="tk" style="left:90.4px;top:703px;height:10px"></div>
<div class="tk" style="left:102.8px;top:703px;height:10px"></div>
<div class="tk" style="left:115.3px;top:703px;height:10px"></div>
<div class="tk" style="left:127.7px;top:703px;height:25px"></div>
<span class="tl" style="left:107.7px">5</span>
<div class="tk" style="left:140.2px;top:703px;height:10px"></div>
<div class="tk" style="left:152.6px;top:703px;height:10px"></div>
<div class="tk" style="left:165.1px;top:703px;height:10px"></div>
<div class="tk" style="left:177.5px;top:703px;height:10px"></div>
<div class="tk" style="left:189.9px;top:703px;height:25px"></div>
<span class="tl" style="left:169.9px">10</span>
<div class="tk" style="left:202.4px;top:703px;height:10px"></div>
<div class="tk" style="left:214.8px;top:703px;height:10px"></div>
<div class="tk" style="left:227.3px;top:703px;height:10px"></div>
<div class="tk" style="left:239.7px;top:703px;height:10px"></div>
<div class="tk" style="left:252.2px;top:703px;height:25px"></div>
<span class="tl" style="left:232.2px">15</span>
<div class="tk" style="left:264.6px;top:703px;height:10px"></div>
<div class="tk" style="left:277.1px;top:703px;height:10px"></div>
<div class="tk" style="left:289.5px;top:703px;height:10px"></div>
<div class="tk" style="left:302.0px;top:703px;height:10px"></div>
<div class="tk" style="left:314.4px;top:703px;height:25px"></div>
<span class="tl" style="left:294.4px">20</span>
<div class="tk" style="left:326.8px;top:703px;height:10px"></div>
<div class="tk" style="left:339.3px;top:703px;height:10px"></div>
<div class="tk" style="left:351.7px;top:703px;height:10px"></div>
<div class="tk" style="left:364.2px;top:703px;height:10px"></div>
<div class="tk" style="left:376.6px;top:703px;height:25px"></div>
<span class="tl" style="left:356.6px">25</span>
<div class="tk" style="left:389.1px;top:703px;height:10px"></div>
<div class="tk" style="left:401.5px;top:703px;height:10px"></div>
<div class="tk" style="left:414.0px;top:703px;height:10px"></div>
<div class="tk" style="left:426.4px;top:703px;height:10px"></div>
<div class="tk" style="left:438.9px;top:703px;height:25px"></div>
<span class="tl" style="left:418.9px">30</span>
<div class="tk" style="left:451.3px;top:703px;height:10px"></div>
<div class="tk" style="left:463.7px;top:703px;height:10px"></div>
<div class="tk" style="left:476.2px;top:703px;height:10px"></div>
<div class="tk" style="left:488.6px;top:703px;height:10px"></div>
<div class="tk" style="left:501.1px;top:703px;height:25px"></div>
<span class="tl" style="left:481.1px">35</span>
<div class="tk" style="left:513.5px;top:703px;height:10px"></div>
<div class="tk" style="left:526.0px;top:703px;height:10px"></div>
<div class="tk" style="left:538.4px;top:703px;height:10px"></div>
<div class="tk" style="left:550.9px;top:703px;height:10px"></div>
<div class="tk" style="left:563.3px;top:703px;height:25px"></div>
<span class="tl" style="left:543.3px">40</span>
<div class="tk" style="left:575.7px;top:703px;height:10px"></div>
<div class="tk" style="left:588.2px;top:703px;height:10px"></div>
<div class="tk" style="left:600.6px;top:703px;height:10px"></div>
<div class="tk" style="left:613.1px;top:703px;height:10px"></div>
<div class="tk" style="left:625.5px;top:703px;height:25px"></div>
<span class="tl" style="left:605.5px">45</span>
<div class="tk" style="left:638.0px;top:703px;height:10px"></div>
<div class="tk" style="left:650.4px;top:703px;height:10px"></div>
<div class="tk" style="left:662.9px;top:703px;height:10px"></div>
<div class="tk" style="left:675.3px;top:703px;height:10px"></div>
<div class="tk" style="left:687.8px;top:703px;height:25px"></div>
<span class="tl" style="left:667.8px">50</span>
<div class="tk" style="left:700.2px;top:703px;height:10px"></div>
<div class="tk" style="left:712.6px;top:703px;height:10px"></div>
<div class="tk" style="left:725.1px;top:703px;height:10px"></div>
<div class="tk" style="left:737.5px;top:703px;height:10px"></div>
<div class="tk" style="left:750.0px;top:703px;height:25px"></div>
<span class="tl" style="left:730.0px">55</span>
<div class="tk" style="left:762.4px;top:703px;height:10px"></div>
<div class="tk" style="left:774.9px;top:703px;height:10px"></div>
<div class="tk" style="left:787.3px;top:703px;height:10px"></div>
<div class="tk" style="left:799.8px;top:703px;height:10px"></div>
<div class="tk" style="left:812.2px;top:703px;height:25px"></div>
<span class="tl" style="left:792.2px">60</span>
<div class="tk" style="left:824.6px;top:703px;height:10px"></div>
<div class="tk" style="left:837.1px;top:703px;height:10px"></div>
<div class="tk" style="left:849.5px;top:703px;height:10px"></div>
<div class="tk" style="left:862.0px;top:703px;height:10px"></div>
<div class="tk" style="left:874.4px;top:703px;height:25px"></div>
<span class="tl" style="left:854.4px">65</span>
<div class="tk" style="left:886.9px;top:703px;height:10px"></div>
<div class="tk" style="left:899.3px;top:703px;height:10px"></div>
<div class="tk" style="left:911.8px;top:703px;height:10px"></div>
<div class="tk" style="left:924.2px;top:703px;height:10px"></div>
<div class="tk" style="left:936.6px;top:703px;height:25px"></div>
<span class="tl" style="left:916.6px">70</span>
<div class="tk" style="left:949.1px;top:703px;height:10px"></div>
<div class="tk" style="left:961.5px;top:703px;height:10px"></div>
<div class="tk" style="left:974.0px;top:703px;height:10px"></div>
<div class="tk" style="left:986.4px;top:703px;height:10px"></div>
<div class="tk" style="left:998.9px;top:703px;height:25px"></div>
<span class="tl" style="left:978.9px">75</span>
<div class="tk" style="left:1011.3px;top:703px;height:10px"></div>
<div class="tk" style="left:1023.8px;top:703px;height:10px"></div>
<div class="tk" style="left:1036.2px;top:703px;height:10px"></div>
<div class="tk" style="left:1048.7px;top:703px;height:10px"></div>
<div class="tk" style="left:1061.1px;top:703px;height:25px"></div>
<span class="tl" style="left:1041.1px">80</span>
<div class="tk" style="left:1073.5px;top:703px;height:10px"></div>
<div class="tk" style="left:1086.0px;top:703px;height:10px"></div>
<div class="tk" style="left:1098.4px;top:703px;height:10px"></div>
<div class="tk" style="left:1110.9px;top:703px;height:10px"></div>
<div class="tk" style="left:1123.3px;top:703px;height:25px"></div>
<span class="tl" style="left:1103.3px">85</span>
<div class="tk" style="left:1135.8px;top:703px;height:10px"></div>
<div class="tk" style="left:1148.2px;top:703px;height:10px"></div>
<div class="tk" style="left:1160.7px;top:703px;height:10px"></div>
<div class="tk" style="left:1173.1px;top:703px;height:10px"></div>
<div class="tk" style="left:1185.5px;top:703px;height:25px"></div>
<span class="tl" style="left:1165.5px">90</span>
<div class="tk" style="left:1198.0px;top:703px;height:10px"></div>
<div class="tk" style="left:1210.4px;top:703px;height:10px"></div>
<div class="tk" style="left:1222.9px;top:703px;height:10px"></div>
<div class="tk" style="left:1235.3px;top:703px;height:10px"></div>
<div class="tk" style="left:1247.8px;top:703px;height:25px"></div>
<span class="tl" style="left:1227.8px">95</span>
<div class="tk" style="left:1260.2px;top:703px;height:10px"></div>
<div class="tk" style="left:1272.7px;top:703px;height:10px"></div>
<div class="tk" style="left:1285.1px;top:703px;height:10px"></div>
<div class="tk" style="left:1297.6px;top:703px;height:10px"></div>
<div class="tk" style="left:1310.0px;top:703px;height:25px"></div>
<span class="tl" style="left:1290.0px">100</span>
<span class="abs" style="left:45px;top:714px;width:40px;text-align:center;font-size:11px;color:#e6d64a">0</span>
</body></html>
